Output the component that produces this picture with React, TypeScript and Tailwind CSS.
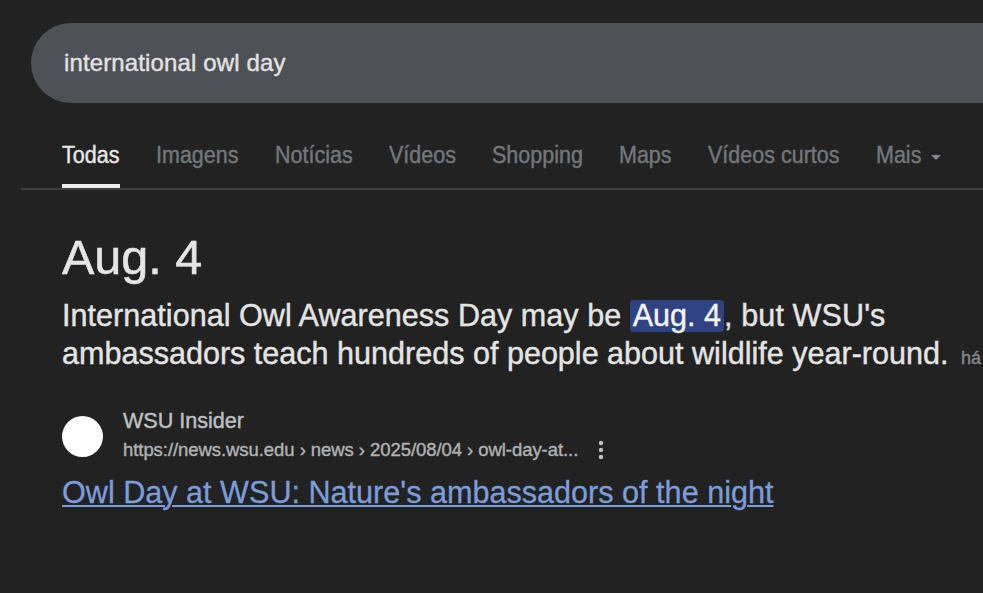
const tabs: { label: string; slot: string }[] = [
  { label: "Imagens", slot: "w-[119px]" },
  { label: "Notícias", slot: "w-[114px]" },
  { label: "Vídeos", slot: "w-[103px]" },
  { label: "Shopping", slot: "w-[127px]" },
  { label: "Maps", slot: "w-[89px]" },
  { label: "Vídeos curtos", slot: "w-[168px]" },
];

function SearchBar() {
  return (
    <div className="mt-[23px] ml-[31px] flex h-[80px] shrink-0 items-center rounded-l-full bg-[#4d5156] pb-[1px] pl-[33px] text-[24px] text-[#e3e3e3]">
      <span className="tracking-[0.13px] [-webkit-text-stroke:0.4px]">international owl day</span>
    </div>
  );
}

function Tabs() {
  return (
    <nav className="ml-[21px] flex h-[87px] shrink-0 border-b-2 border-[#3d3e3f] pl-[41px] text-[23px] whitespace-nowrap text-[#74787c] [-webkit-text-stroke:0.4px]">
      <div className="mr-[37px] h-[85px] w-[58px] shrink-0 border-b-4 border-[#eeeeee] pt-[35px] text-[#e8e8e8]">
        <span className="inline-block origin-left scale-x-[0.935]">Todas</span>
      </div>
      {tabs.map((tab) => (
        <div key={tab.label} className={"-ml-[1px] mr-[1px] shrink-0 pt-[35px] " + tab.slot}>
          <span className="inline-block origin-left scale-x-[0.935]">{tab.label}</span>
        </div>
      ))}
      <div className="-ml-[1px] flex shrink-0 pt-[35px]">
        <span className="inline-block w-[55px] origin-left scale-x-[0.935]">Mais</span>
        <span className="mt-[17px] h-0 w-0 border-x-[5px] border-t-[5px] border-x-transparent border-t-[#85898d]" />
      </div>
    </nav>
  );
}

function Answer() {
  return (
    <section className="flex flex-col pl-[62px] whitespace-nowrap text-[#e5e5e5]">
      <h1 className="mt-[39px] text-[48.5px] leading-[56px] [-webkit-text-stroke:0.5px]">Aug. 4</h1>
      <p className="mt-[12px] text-[30.55px] leading-[37.5px] [-webkit-text-stroke:0.4px]">
        <span className="tracking-[0.03px]">International Owl Awareness Day may be </span>
        <mark className="mt-[3px] inline-block h-[32px] rounded-[4px] bg-[#2f4282] px-[3px] align-top leading-[30px] text-[#f4f4f4]">Aug. 4</mark>
        <span className="tracking-[0.1px]">, but WSU's</span>
        <br />
        ambassadors teach hundreds of people about wildlife year-round.{" "}
        <small className="ml-[4px] text-[18px] text-[#85888b]">há</small>
      </p>
    </section>
  );
}

function Result() {
  return (
    <article className="mt-[32px] flex flex-col pl-[62px] whitespace-nowrap">
      <div className="flex h-[57px]">
        <span className="mt-[7px] h-[41px] w-[41px] rounded-full bg-white" />
        <div className="ml-[20px] flex flex-col text-[#bfc1c3] [-webkit-text-stroke:0.4px]">
          <span className="h-[29px] origin-left scale-x-[0.98] text-[22px] leading-[24px]">WSU Insider</span>
          <div className="flex h-[24px] items-center">
            <span className="text-[18.5px] leading-[24px] tracking-[-0.06px] text-[#b0b2b4]">
              https://news.wsu.edu › news › 2025/08/04 › owl-day-at...
            </span>
            <svg className="ml-[19px] h-[20px] w-[8px] fill-[#bfc1c3] [stroke:none]" viewBox="0 0 8 20">
              <circle cx="4" cy="3" r="2.2" />
              <circle cx="4" cy="10" r="2.2" />
              <circle cx="4" cy="17" r="2.2" />
            </svg>
          </div>
        </div>
      </div>
      <a className="mt-[8px] self-start text-[30.6px] leading-[37px] text-[#7c9ddb] underline decoration-2 underline-offset-[2px] [-webkit-text-stroke:0.3px]">
        Owl Day at WSU: Nature's ambassadors of the night
      </a>
    </article>
  );
}

export default function App() {
  return (
    <main className="flex h-[593px] w-[983px] flex-col overflow-hidden bg-[#222222] font-['Liberation_Sans',Arial,sans-serif]">
      <SearchBar />
      <Tabs />
      <Answer />
      <Result />
    </main>
  );
}
